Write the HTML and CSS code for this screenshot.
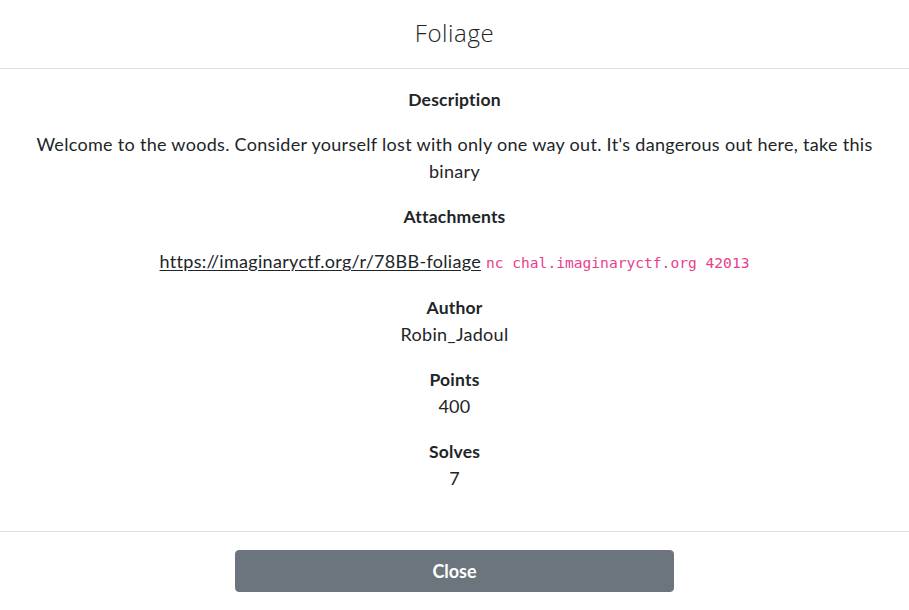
FILE: index.html
```html
<!DOCTYPE html>
<html lang="en">
<head>
<meta charset="utf-8">
<title>Foliage</title>
<link rel="stylesheet" href="styles.css">
</head>
<body>
<div class="modal">
  <header class="modal-header">
    <h1 class="modal-title">Foliage</h1>
  </header>
  <main class="modal-body">
    <h2 class="label">Description</h2>
    <p class="desc">Welcome to the woods. Consider yourself lost with only one way out. It's dangerous out here, take this binary</p>
    <h2 class="label">Attachments</h2>
    <p class="attach"><a href="#" class="link">https://imaginaryctf.org/r/78BB-foliage</a> <code class="code">nc chal.imaginaryctf.org 42013</code></p>
    <div class="field">
      <h2 class="label tight">Author</h2>
      <div class="value">Robin_Jadoul</div>
    </div>
    <div class="field">
      <h2 class="label tight">Points</h2>
      <div class="value">400</div>
    </div>
    <div class="field">
      <h2 class="label tight">Solves</h2>
      <div class="value">7</div>
    </div>
  </main>
  <footer class="modal-footer">
    <button class="btn-close" type="button">Close</button>
  </footer>
</div>
</body>
</html>
```

FILE: styles.css
```css
* { box-sizing: border-box; }
html, body { margin: 0; padding: 0; background: #fff; }
body {
  font-family: "Lato", "Noto Sans", sans-serif;
  color: #212529;
  font-size: 18px;
  letter-spacing: 0.3px;
}
.modal { width: 909px; }
.modal-header {
  height: 69px;
  border-bottom: 1px solid #dee2e6;
  display: flex;
  align-items: center;
  justify-content: center;
}
.modal-title {
  margin: 0;
  font-family: "Open Sans", "Lato", sans-serif;
  font-weight: 300;
  font-size: 24px;
  letter-spacing: 0.6px;
  color: #212529;
  padding-bottom: 3px;
}
.modal-body {
  padding: 17px 16px 39px;
  text-align: center;
  display: flex;
  flex-direction: column;
}
.label {
  margin: 0 0 18px;
  font-size: 17.5px;
  font-weight: 700;
  line-height: 27px;
  letter-spacing: 0.2px;
}
.label.tight { margin-bottom: 0; }
.desc, .attach {
  margin: 0 0 18px;
  line-height: 27px;
}
.link { color: #212529; text-decoration: underline; text-underline-offset: 2px; }
.code {
  font-family: "DejaVu Sans Mono", monospace;
  font-size: 14.6px;
  letter-spacing: 0;
  color: #e83e8c;
}
.field { margin-bottom: 18px; }
.field:last-child { margin-bottom: 0; }
.value { line-height: 27px; }
.modal-footer {
  border-top: 1px solid #dee2e6;
  padding: 18px 0;
  display: flex;
  justify-content: center;
}
.btn-close {
  width: 439px;
  height: 42px;
  background: #6c757d;
  border: 1px solid #6c757d;
  border-radius: 4px;
  color: #fff;
  font-family: "Lato", sans-serif;
  font-weight: 700;
  font-size: 18px;
  cursor: pointer;
}
```
